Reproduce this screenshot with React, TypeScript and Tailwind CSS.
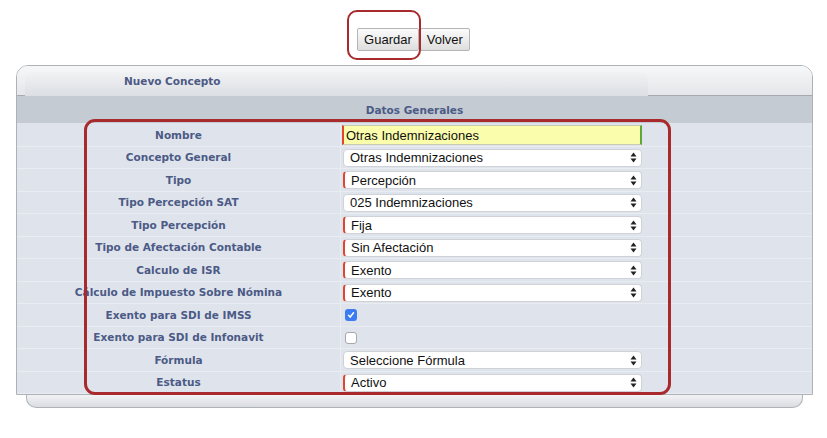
const rows: { label: string; kind: "input" | "select" | "check"; value?: string; req?: boolean; checked?: boolean }[] = [
  { label: "Nombre", kind: "input", value: "Otras Indemnizaciones" },
  { label: "Concepto General", kind: "select", value: "Otras Indemnizaciones" },
  { label: "Tipo", kind: "select", value: "Percepción", req: true },
  { label: "Tipo Percepción SAT", kind: "select", value: "025 Indemnizaciones" },
  { label: "Tipo Percepción", kind: "select", value: "Fija", req: true },
  { label: "Tipo de Afectación Contable", kind: "select", value: "Sin Afectación", req: true },
  { label: "Calculo de ISR", kind: "select", value: "Exento", req: true },
  { label: "Cálculo de Impuesto Sobre Nómina", kind: "select", value: "Exento", req: true },
  { label: "Exento para SDI de IMSS", kind: "check", checked: true },
  { label: "Exento para SDI de Infonavit", kind: "check", checked: false },
  { label: "Fórmula", kind: "select", value: "Seleccione Fórmula" },
  { label: "Estatus", kind: "select", value: "Activo", req: true },
];

const labelFont = { fontFamily: "'DejaVu Sans', Verdana, sans-serif" };

function Arrows() {
  return (
    <svg width="7" height="11" viewBox="0 0 7 11" className="shrink-0">
      <path d="M3.5 0.5 L6.5 4.5 L0.5 4.5 Z" fill="#222" />
      <path d="M3.5 10.5 L6.5 6.5 L0.5 6.5 Z" fill="#222" />
    </svg>
  );
}

function Field({ row }: { row: (typeof rows)[number] }) {
  if (row.kind === "input") {
    return (
      <div className="w-[300px] h-[20px] bg-[#fafdab] border border-[#c9cbb0] border-l-2 border-l-[#e0452e] border-r-2 border-r-[#5cab3a] flex items-center pl-[2px] text-[13px] text-[#111]">
        {row.value}
      </div>
    );
  }
  if (row.kind === "check") {
    return row.checked ? (
      <div className="ml-[3px] w-[12px] h-[12px] rounded-[3px] bg-[#3d7cf0] flex items-center justify-center">
        <svg width="8" height="8" viewBox="0 0 8 8">
          <path d="M1.5 4.2 L3.2 6 L6.5 1.8" stroke="#fff" strokeWidth="1.5" fill="none" strokeLinecap="round" />
        </svg>
      </div>
    ) : (
      <div className="ml-[3px] w-[12px] h-[12px] rounded-[3px] bg-white border border-[#a5a8ad]" />
    );
  }
  return (
    <div
      className={`ml-[1px] w-[299px] h-[18px] bg-white rounded-[4px] border border-[#cfd2d6] flex items-center justify-between pl-[6px] pr-[4px] text-[13px] text-[#111] ${
        row.req ? "border-l-2 border-l-[#e0452e]" : ""
      }`}
    >
      <span>{row.value}</span>
      <Arrows />
    </div>
  );
}

export default function App() {
  return (
    <div className="w-[827px] h-[438px] bg-white relative" style={{ fontFamily: "'Liberation Sans', Arial, sans-serif" }}>
      <div className="flex justify-center gap-[1px] pt-[28px]">
        <button className="h-[23px] px-[6px] border border-[#b5b5b5] rounded-[2px] bg-gradient-to-b from-[#fbfbfb] to-[#dedede] text-[13px] text-[#111]">
          Guardar
        </button>
        <button className="h-[23px] px-[6px] border border-[#b5b5b5] rounded-[2px] bg-gradient-to-b from-[#fbfbfb] to-[#dedede] text-[13px] text-[#111]">
          Volver
        </button>
      </div>

      <div className="ml-[16px] w-[797px] mt-[14px]">
        <div className="border border-[#aeb2b8] rounded-t-[12px] overflow-hidden">
          <div className="h-[30px] bg-gradient-to-b from-[#f6f7f8] to-[#e4e6e9] pt-[6px] pl-[8px] border-b border-[#a6abb2]">
            <div className="w-[623px] h-[24px] rounded-t-[10px] bg-gradient-to-b from-[#f1f2f4] to-[#dcdfe3] flex items-center pb-[4px] pl-[99px] text-[10.5px] font-bold text-[#4c5a86]" style={labelFont}>
              Nuevo Concepto
            </div>
          </div>
          <div className="h-[27px] pt-[3px] bg-[#c4cbd3] flex items-center justify-center text-[10.5px] font-bold text-[#4c5a86]" style={labelFont}>
            Datos Generales
          </div>
          <div className="bg-[#dfe4ec] pt-[1px]">
            {rows.map((r) => (
              <div key={r.label} className="flex h-[22.5px] border-b border-[#e9edf2]">
                <div className="w-[324px] flex items-center justify-center pt-[2px] text-[10.5px] font-bold text-[#4c5a86] border-r border-[#e9edf2]" style={labelFont}>
                  {r.label}
                </div>
                <div className="flex-1 flex items-center pt-[1px] pl-[1px]">
                  <Field row={r} />
                </div>
              </div>
            ))}
          </div>
        </div>
        <div className="mx-[10px] h-[13px] rounded-b-[10px] border border-t-0 border-[#b0b4b9] bg-gradient-to-b from-[#f2f3f5] to-[#d9dce0]" />
      </div>

      <div className="absolute left-[347px] top-[10px] w-[74px] h-[50px] rounded-[10px] border-2 border-[#a82a2c]" />
      <div className="absolute left-[84px] top-[119px] w-[587px] h-[276px] rounded-[11px] border-[3px] border-[#a82a2c]" />
    </div>
  );
}
